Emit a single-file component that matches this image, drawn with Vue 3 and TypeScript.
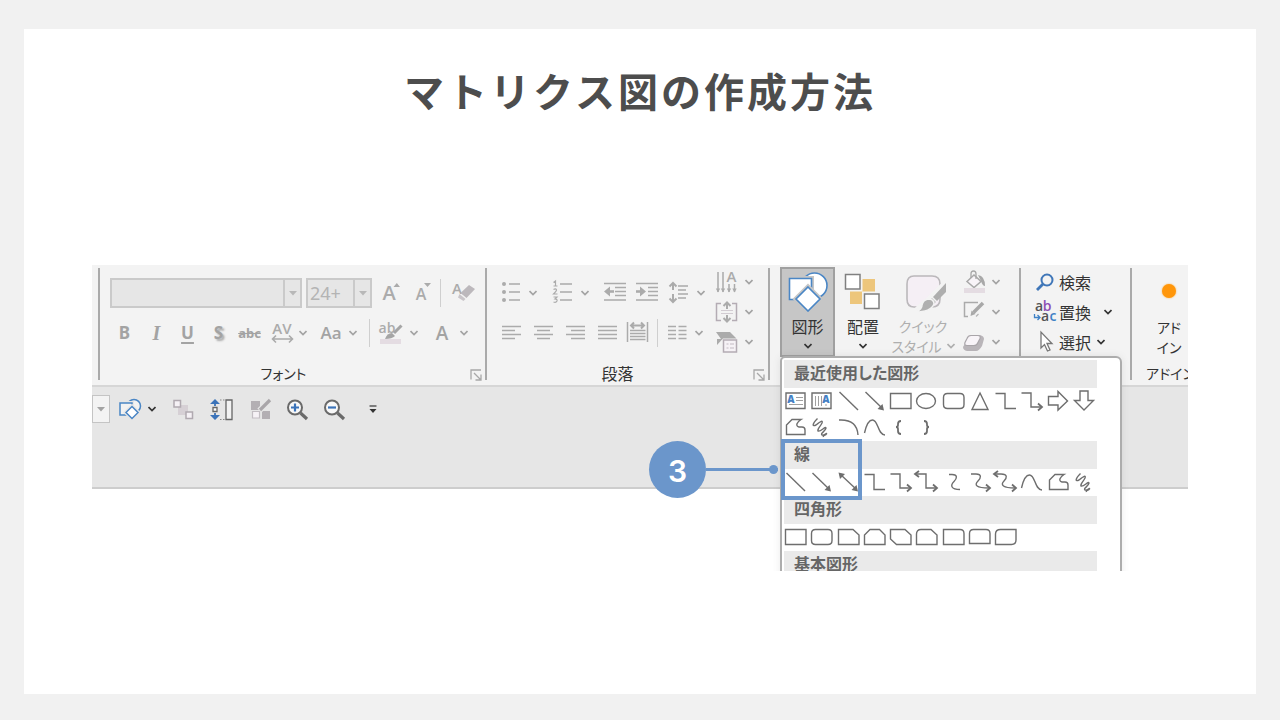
<script setup lang="ts">
import { h } from 'vue'

interface Part {
  tag: 'path' | 'text'
  attrs: Record<string, string | number>
  text?: string
}
interface Icon {
  w: number
  h: number
  parts: Part[]
}

const GREY = '#ababab'
const INK = '#6e6e6e'
const BLUE = '#4a86c5'

const line = (d: string, stroke = GREY, width = 1.5, fill = 'none'): Part => ({
  tag: 'path',
  attrs: { d, stroke, 'stroke-width': width, fill },
})
const solid = (d: string, fill = GREY): Part => ({ tag: 'path', attrs: { d, fill } })
const label = (text: string, x: number, y: number, size: number, fill = GREY, weight = 600): Part => ({
  tag: 'text',
  attrs: {
    x, y, fill, 'font-size': size, 'font-weight': weight,
    'text-anchor': 'middle', 'font-family': '"Open Sans", "Noto Sans", sans-serif',
  },
  text,
})
const circle = (cx: number, cy: number, r: number) =>
  `M${cx - r} ${cy}a${r} ${r} 0 1 0 ${2 * r} 0a${r} ${r} 0 1 0 ${-2 * r} 0z`
const icon = (w: number, hgt: number, ...parts: Part[]): Icon => ({ w, h: hgt, parts })
const tool = (...parts: Part[]) => icon(32, 30, ...parts)
const quick = (...parts: Part[]) => icon(36, 36, ...parts)
const shape = (d: string, ...rest: Part[]) => icon(26, 26, line(d, INK, 1.4), ...rest)

const headSE = solid('M23 22.5l-6.5-1.500 5-5z', INK)
const headNW = solid('M3.500 3.500l6.500 1.500-5 5z', INK)
const headE = line('M20 15.500l4 3.500-4 3.500', INK, 1.8)
const headW = line('M6 2l-4 3 4 3', INK, 1.8)
const scribble = 'M9.500 4.500C4 10 4 13 8 11c5-4 7-5 6-2-2 4-5 6-4 8 3 1 7-5 8-3-1 4-6 5-4 7 2 1 5-3 4.500-1-1 2-4 1-3 3'
const freeform = 'M4.500 20.500v-9.500L10 5.500h9c-4 2.500-6 6.500-2 7.500h3q3 0 3 3v4.500z'
const wave = 'M3.500 19c2-9 5-13 8-13 6 0 5 15 12.500 15'
const roundRect = 'M7.500 5.500h12.500q4 0 4 4v7q0 4-4 4h-12.500q-4 0-4-4v-7q0-4 4-4z'

const icons: Record<string, Icon> = {
  chevron: icon(8, 6, line('M0.500 1l3.500 3.500L7.500 1', 'currentColor', 1.7)),
  caret: icon(8, 5, solid('M0 0h8L4 4.500z', 'currentColor')),
  launcher: icon(12, 12, line('M1 10.500V1h10M4 4l6.500 6.500M11 5.500v5.500H5.500', '#a8a8a8', 1.3)),
  growA: icon(30, 30, label('A', 13, 22, 20), solid('M17.500 9h6.500l-3.200-4z')),
  shrinkA: icon(26, 30, label('A', 11, 22, 16), solid('M14 5h7l-3.500 4z')),
  eraser: icon(34, 30, label('A', 12, 16, 15), solid('M24 7l6 4-8.500 9-6-5z', '#bcb8bc'), solid('M14.500 16l6 5-2 2-5.500-3.500z', '#c9c5c9')),
  spacing: tool(label('AV', 17, 16, 15), line('M8 21h19M11 17.500L7.500 21l3.500 3.500M24 17.500l3.500 3.500-3.500 3.500', GREY, 1.6)),
  marker: tool(label('ab', 11, 15, 14), line('M25.500 7.500L18 15', '#a5a5a5', 3), solid('M9 21q2-6 7-6l3 3q-3 3-10 3z', '#a5a5a5'), solid('M4 21h21v5H4z', '#e4dce2')),
  bullets: tool(solid(circle(9, 6, 2) + circle(9, 14, 2) + circle(9, 22, 2)), line('M14 6h11M14 14h11M14 22h11')),
  numbers: tool(line('M6.500 4.500L8.500 3v5M6.500 8h4M6.500 11.500q2.500-1.500 3 .5 0 1-3 4h4M6.500 19h3.500l-2 2q2.500 0 2 2-1 2-3.500 1', GREY, 1.2), line('M13 6h12M13 14h12M13 22h12')),
  outdent: tool(line('M5 5.500h22M16 9.500h11M16 13.500h11M16 17.500h11M5 22h22'), line('M15 13.500H8', GREY, 2.6), solid('M5 13.500l6-5v10z')),
  indent: tool(line('M5 5.500h22M17 9.500h10M17 13.500h10M17 17.500h10M5 22h22'), line('M5 13.500h7', GREY, 2.6), solid('M15 13.500l-6-5v10z')),
  leading: tool(line('M10 5v7M10 16v8M6.500 8.500L10 5l3.500 3.500M6.500 20.500L10 24l3.500-3.500', GREY, 2), line('M15 8h10M15 12h8M15 16h10M15 20h8')),
  alignLeft: tool(line('M7 8.500h19M7 12.500h13M7 16.500h19M7 20.500h13')),
  alignCenter: tool(line('M7 8.500h19M10 12.500h13M7 16.500h19M10 20.500h13')),
  alignRight: tool(line('M7 8.500h19M12 12.500h14M7 16.500h19M12 20.500h14')),
  justify: tool(line('M7 8.500h19M7 12.500h19M7 16.500h19M7 20.500h19')),
  distribute: tool(line('M4.500 4v20M24.500 4v20M7 12.500h15.500M7 15.500h15.500M7 18.500h15.500M7 21.500h15.500'), line('M8 7.500h13M11 4.500l-3 3 3 3M18 4.500l3 3-3 3', GREY, 2)),
  columns: tool(line('M7 8.500h8M7 12.500h8M7 16.500h8M7 20.500h8M17.500 8.500h8M17.500 12.500h8M17.500 16.500h8M17.500 20.500h8')),
  textDir: tool(line('M7 5v20M12 5v20M18 17v8M23.500 17v8'), solid('M4.800 21.500h4.400L7 25.500zM9.800 21.500h4.400L12 25.500zM15.800 21.500h4.400L18 25.500zM21.300 21.500h4.400l-2.200 4z'), label('A', 20.5, 15, 15)),
  textAlign: tool(line('M10 6.500H5.500v17H10M21 6.500h4.500v17H21', '#b4acb4'), line('M16 6v6M16 18v6M12.500 9L16 5.500 19.500 9M12.500 21l3.500 3.500 3.500-3.500', GREY, 2), line('M10 13.500h12M10 16.500h12', '#d2ccd2', 1)),
  smartArt: tool(solid('M5 5h14l6.500 6.500H12L6 18v-6h4z'), line('M12.500 13h13v12h-13z', '#b4acb4', 1.5, '#f6f2f6'), line('M15.500 17h2M19 17h4M15.500 21h2M19 21h4', '#c2bac2', 1.2)),
  shapes: icon(42, 42,
    line(circle(27.5, 15.5, 12.5), BLUE, 1.6, '#fff'),
    line('M2.500 8.500h22v21h-22z', '#c6c6c6', 5),
    line('M2.500 8.500h22v21h-22z', BLUE, 1.6, '#fff'),
    line('M21 17l12 12-12 12L9 29z', '#c6c6c6', 5),
    line('M21 17l12 12-12 12L9 29z', BLUE, 1.6, '#fff')),
  arrange: icon(42, 42, solid('M20 9h13v14H20.500v11H8V21h12z', '#edc67c'),
    line('M3.500 4.500h14.500v14.500h-14.500z', '#f3f3f3', 5), line('M22.500 24h14.500v14.500h-14.500z', '#f3f3f3', 5),
    line('M3.500 4.500h14.500v14.500h-14.500z', '#808080', 1.5, '#fff'), line('M22.500 24h14.500v14.500h-14.500z', '#808080', 1.5, '#fff')),
  quickStyle: icon(46, 42,
    line('M14 6h18q8 0 8 8v15q0 8-8 8H14q-7 0-7-8V14q0-8 7-8z', '#bbb8bb', 1.6, '#f5eff5'),
    line('M46 15L30 31l-12 10', '#f3f3f3', 9),
    solid('M46 13v9L37 31l-4-4z', '#aeaeae'), solid('M32 28l4 4-3 3-4-4z', '#c4c4c4'),
    line('M28 29q6 0 6 5-3 8-19 8 7-2 7-7 1-5 6-6z', '#f3f3f3', 1.5, '#b0b0b0')),
  fill: tool(line('M9 14.500l7-6.500 7 6.500-7 6z', '#a8a8a8', 1.5, '#f8f4f8'), line('M13 11V7q0-3 2.500-3T18 7v5', '#a8a8a8', 1.3), solid('M20 8q7 1 7 11-2.500 0-4-5z', '#a8a8a8'), solid('M6 21h21v5H6z', '#e4dce2')),
  outline: tool(line('M20 5.500H6.500v14h3.500', '#aaa'), line('M25 6L15.500 15.500', '#a8a8a8', 3.5), solid('M13.500 13.500l4 3.500-5 2z', '#a8a8a8'), line('M20.500 17l-2.500 2.500', '#b5b5b5', 1.3)),
  effects: tool(solid('M12 8h10q4 1 4 4l-2 7q-3 5-6 5H9q-4-1-4-4z', '#b9b5b9'), line('M13 8.500h7q3 0 2 3l-2 4q-1 3-4 3H9q-3 0-2-3l2-4q1-3 4-3z', '#a9a5a9', 1.2, '#f8f4f8')),
  search: icon(28, 30, line(circle(17, 13, 5.5), '#3f76b8', 2), line('M13 17l-6 6', '#3f76b8', 2.8)),
  replace: icon(28, 30, label('a', 9, 14, 14, '#555'), label('b', 17, 14, 14, '#8e4fb5'), label('a', 15, 24, 14, '#555'), label('c', 23, 24, 14, '#3f82c6'), line('M4.500 17v3.500h5M7.500 18l2.500 2.500L7.500 23', '#3f82c6', 1.3)),
  select: icon(28, 30, line('M11 5v16l3.500-3.500 3 6.500 2.500-1-3-6.500h5z', '#777', 1.3, '#fff')),
  quickShapes: quick(line(circle(22, 15, 6.5), BLUE, 1.5, '#f2f2f2'), line('M8 12h12v12H8z', '#e6e6e6', 4), line('M8 12h12v12H8z', BLUE, 1.5, '#f2f2f2'), line('M20 15.500l6 6-6 6-6-6z', '#e6e6e6', 4), line('M20 15.500l6 6-6 6-6-6z', BLUE, 1.5, '#fff')),
  group: quick(solid('M13 14h10v10H13z', '#d6d0d5'), line('M9 9.500h6.500V16H9zM21 21h6.500v6.500H21z', '#b0a9b0', 1.5, '#f5f1f5')),
  size: quick(solid('M12 8l5 5H7zM12 29l5-5H7z', '#3b73b9'), line('M12 11v4M12 22v4', '#3b73b9', 1.8), line('M10 16.500h4v4h-4z', '#666', 1.3, '#fff'), line('M23 9h6v19.500h-6z', '#666', 1.3, '#f2f2f2'), { tag: 'path', attrs: { d: 'M17 9h6M17 28.500h6', stroke: '#888', 'stroke-dasharray': '1.500 1.500' } }),
  editPoints: quick(solid('M10 10h9v9h-9zM21 20h8v8h-8z', '#b3afb3'), line('M11.500 20.500h7V27h-7z', '#c3bec3', 1.2, '#f6f2f6'), line('M29 9L18.500 19.500', '#e6e6e6', 6), line('M29 9L19 19', '#a9a6a9', 3.2)),
  zoomIn: quick(line(circle(16, 16.5, 7), '#6a6a6a', 2, '#f8f8f8'), line('M21.500 22l6.500 6', '#6a6a6a', 3.2), line('M12 16.500h8M16 12.500v8', '#3b73b9', 2.2)),
  zoomOut: quick(line(circle(15, 16.5, 7), '#6a6a6a', 2, '#f8f8f8'), line('M20.500 22l6.500 6', '#6a6a6a', 3.2), line('M11 16.500h8', '#3b73b9', 2.2)),
  more: quick(line('M14.500 15h7', '#444', 1.3), solid('M14.500 18h7L18 22z', '#333')),
  textBox: shape('M4 5h19v15.500H4z', label('A', 9, 15, 10, '#4580c4', 800), line('M14 9.500h7M14 12.500h7M7 16.500h14', '#a0a0a0', 1)),
  textBoxV: shape('M4 5h19v15.500H4z', label('A', 18, 15, 10, '#4580c4', 800), line('M7.500 8v10M10.500 8v10M13.500 8v10M18 16v2', '#a0a0a0', 1)),
  line: shape('M4.500 4L23 22'),
  arrow: shape('M4.500 4l17 16.500', headSE),
  arrows: shape('M5 5l16.500 15.500', headSE, headNW),
  rect: shape('M3.500 5.500H24v15H3.500z'),
  oval: shape('M3.500 13a9.500 7.500 0 1 0 19 0a9.500 7.500 0 1 0 -19 0z'),
  roundRect: shape(roundRect),
  triangle: shape('M14 5l8 16.500H6z'),
  elbow: shape('M3.500 5.500H13v15h11'),
  elbowArrow: shape('M3.500 5H13v14h10', headE),
  elbowArrows: shape('M3 5h10v14h10', headE, headW),
  rightArrow: shape('M3.500 8.500H13v-5l9.500 9.500L13 22v-5H3.500z'),
  downArrow: shape('M9 3h8v9.500h5.500L13 22l-9.500-9.500H9z'),
  freeform: shape(freeform),
  scribble: shape(scribble),
  arc: shape('M4 6q18-1 19 15'),
  wave: shape(wave),
  braceL: icon(26, 26, line('M14 7q-3 0-3 3v1q0 2-2 2 2 0 2 2v2q0 3 3 3', INK, 1.8)),
  braceR: icon(26, 26, line('M11 7q3 0 3 3v1q0 2 2 2-2 0-2 2v2q0 3-3 3', INK, 1.8)),
  curve: shape('M9 5.500h3c6 0 5 4 2 7-4 4-3 8 6 8'),
  curveArrow: shape('M5 5h5c6 0 5 4 2 7-4 4-2 7 11 7', headE),
  curveArrows: shape('M3 5h6c7 0 6 4 3 7-4 4-1 7 11 7', headE, headW),
  snipOne: shape('M3.500 5.500H18l6 5.500v9.500H3.500z'),
  snipTwo: shape('M9 5.500h9.500L24 11v9.500H3.500V11z'),
  snipDiag: shape('M3.500 5.500H18l6 5.500v9.500H9.500l-6-5.500z'),
  snipRound: shape('M8 5.500h10l6 5.500v9.500H3.500V10q0-4.500 4.500-4.500z'),
  roundOne: shape('M3.500 5.500H20q4 0 4 4v11H3.500z'),
  roundTwo: shape('M7.500 5.500H20q4 0 4 4v10H3.500v-10q0-4 4-4z'),
  roundDiag: shape('M8.500 5.500H24v10.500q0 4.500-4.500 4.500h-16V10q0-4.500 5-4.500z'),
}

const Glyph = (props: { name: string }) => {
  const i = icons[props.name]
  return h(
    'svg',
    { width: i.w, height: i.h, viewBox: `0 0 ${i.w} ${i.h}`, 'aria-hidden': 'true' },
    i.parts.map((p) => h(p.tag, p.attrs, p.text)),
  )
}
Glyph.props = ['name']

const menu = [
  {
    title: '最近使用した図形',
    shapes: [
      'textBox', 'textBoxV', 'line', 'arrow', 'rect', 'oval', 'roundRect', 'triangle', 'elbow', 'elbowArrow', 'rightArrow', 'downArrow',
      'freeform', 'scribble', 'arc', 'wave', 'braceL', 'braceR',
    ],
  },
  {
    title: '線',
    step: 3,
    shapes: ['line', 'arrow', 'arrows', 'elbow', 'elbowArrow', 'elbowArrows', 'curve', 'curveArrow', 'curveArrows', 'wave', 'freeform', 'scribble'],
  },
  {
    title: '四角形',
    shapes: ['rect', 'roundRect', 'snipOne', 'snipTwo', 'snipDiag', 'snipRound', 'roundOne', 'roundTwo', 'roundDiag'],
  },
  { title: '基本図形', shapes: [] },
]
const styleTools = ['fill', 'outline', 'effects']
const textTools = ['textDir', 'textAlign', 'smartArt']
const aligns = ['alignLeft', 'alignCenter', 'alignRight', 'justify', 'distribute']
const quickTools = ['group', 'size', 'editPoints', 'zoomIn', 'zoomOut', 'more']
</script>

<template>
  <div class="page">
    <main class="slide">
      <h1>マトリクス図の作成方法</h1>

      <section class="app">
        <div class="ribbon">
          <span class="rule"></span>
          <div class="group font">
            <div class="rows">
              <div class="row spaced">
                <label class="combo family">
                  <select disabled aria-label="フォント名"><option></option></select>
                  <span class="drop"><Glyph name="caret" /></span>
                </label>
                <label class="combo points">
                  <select disabled aria-label="サイズ"><option>24+</option></select>
                  <span class="drop"><Glyph name="caret" /></span>
                </label>
                <button disabled><Glyph name="growA" /></button>
                <button disabled><Glyph name="shrinkA" /></button>
                <span class="bar"></span>
                <button disabled><Glyph name="eraser" /></button>
              </div>
              <div class="row">
                <button disabled class="mark">B</button>
                <button disabled class="mark italic">I</button>
                <button disabled class="mark under">U</button>
                <button disabled class="mark shadow">S</button>
                <button disabled class="mark strike">abc</button>
                <button disabled class="split"><Glyph name="spacing" /><Glyph name="chevron" /></button>
                <button disabled class="split after"><span class="letter">Aa</span><Glyph name="chevron" /></button>
                <span class="bar wide"></span>
                <button disabled class="split"><Glyph name="marker" /><Glyph name="chevron" /></button>
                <button disabled class="split after"><span class="letter big">A</span><Glyph name="chevron" /></button>
              </div>
            </div>
            <footer class="kana">フォント<Glyph name="launcher" class="launch" /></footer>
          </div>

          <span class="rule"></span>
          <div class="group para">
            <div class="cols">
              <div class="rows">
                <div class="row">
                  <button disabled class="split"><Glyph name="bullets" /><Glyph name="chevron" /></button>
                  <button disabled class="split far"><Glyph name="numbers" /><Glyph name="chevron" /></button>
                  <button disabled class="far"><Glyph name="outdent" /></button>
                  <button disabled><Glyph name="indent" /></button>
                  <button disabled class="split"><Glyph name="leading" /><Glyph name="chevron" /></button>
                </div>
                <div class="row">
                  <button v-for="a in aligns" :key="a" disabled><Glyph :name="a" /></button>
                  <span class="bar near"></span>
                  <button disabled class="split"><Glyph name="columns" /><Glyph name="chevron" /></button>
                </div>
              </div>
              <div class="stack">
                <button v-for="t in textTools" :key="t" disabled class="split"><Glyph :name="t" /><Glyph name="chevron" /></button>
              </div>
            </div>
            <footer>段落<Glyph name="launcher" class="launch" /></footer>
          </div>

          <span class="rule"></span>
          <div class="group draw">
            <div class="cols">
              <div class="anchor">
                <button class="large active" aria-expanded="true"><Glyph name="shapes" /><span>図形</span><Glyph name="chevron" /></button>
                <div class="menu">
                  <section v-for="s in menu" :key="s.title">
                    <h2>{{ s.title }}</h2>
                    <div class="grid">
                      <button v-for="(n, i) in s.shapes" :key="i"><Glyph :name="n" /></button>
                    </div>
                    <template v-if="s.step">
                      <div class="focus"></div>
                      <div class="callout"><b>{{ s.step }}</b><i></i></div>
                    </template>
                  </section>
                </div>
              </div>
              <button class="large"><Glyph name="arrange" /><span>配置</span><Glyph name="chevron" /></button>
              <button disabled class="large styles kana">
                <Glyph name="quickStyle" /><span>クイック</span>
                <span class="tail">スタイル<Glyph name="chevron" /></span>
              </button>
              <div class="stack">
                <button v-for="t in styleTools" :key="t" disabled class="split"><Glyph :name="t" /><Glyph name="chevron" /></button>
              </div>
            </div>
          </div>

          <span class="rule"></span>
          <div class="group edit">
            <div class="stack">
              <button class="command"><Glyph name="search" />検索</button>
              <button class="command loose"><Glyph name="replace" />置換<Glyph name="chevron" /></button>
              <button class="command"><Glyph name="select" />選択<Glyph name="chevron" /></button>
            </div>
          </div>

          <span class="rule"></span>
          <div class="group addin kana">
            <button class="addin-button"><i class="dot"></i><span>アド<br />イン</span></button>
            <footer>アドイン</footer>
          </div>
        </div>

        <div class="quickbar">
          <button class="stub" disabled><Glyph name="caret" /></button>
          <button class="pick"><Glyph name="quickShapes" /><Glyph name="chevron" /></button>
          <div class="tools">
            <button v-for="q in quickTools" :key="q"><Glyph :name="q" /></button>
          </div>
        </div>
      </section>
    </main>
  </div>
</template>

<style>
body {
  margin: 0;
}
</style>

<style scoped>
* {
  box-sizing: border-box;
}
.page {
  min-height: 100vh;
  padding: 29px 24px 26px;
  display: flex;
  background: #f1f1f1;
  font-family: "Noto Sans", "Noto Sans CJK JP", sans-serif;
  color: #333;
}
.slide {
  flex: 1;
  min-width: 0;
  background: #fff;
}
h1 {
  margin: 31px 0 145px;
  font-family: "Noto Sans CJK JP", sans-serif;
  font-size: 40px;
  line-height: 60px;
  letter-spacing: 3px;
  text-align: center;
  color: #4d4d4d;
}
svg {
  display: block;
  flex: none;
}
button {
  padding: 0;
  border: 0;
  background: none;
  font: inherit;
  color: inherit;
  line-height: 20px;
}
button:disabled {
  color: #a3a3a3;
}
.app {
  position: relative;
  margin: 0 68px;
  min-height: 306px;
  overflow: hidden;
  font-family: "Noto Sans CJK JP", sans-serif;
  font-size: 16px;
  line-height: 20px;
  font-feature-settings: "palt";
}
.ribbon {
  height: 120px;
  padding-left: 6px;
  display: flex;
  background: #f3f3f3;
}
.rule {
  flex: none;
  width: 2px;
  margin: 3px 0 5px;
  background: #aaa;
}
.group {
  display: flex;
  flex-direction: column;
  justify-content: space-between;
  min-width: 0;
}
.font {
  flex: 385 1 385px;
  padding-left: 10px;
}
.para {
  flex: 281 1 281px;
  padding-left: 8px;
}
.draw {
  flex: 249 1 249px;
  padding-left: 10px;
}
.edit {
  flex: 109 1 109px;
  padding-left: 9px;
}
.addin {
  flex: 56 1 56px;
}
.kana {
  font-size: 14px;
}
.rows {
  padding-top: 13px;
  display: flex;
  flex-direction: column;
  gap: 10px;
}
.row {
  height: 30px;
  display: flex;
  align-items: center;
}
.spaced {
  gap: 4px;
}
.cols {
  display: flex;
}
.para .cols {
  gap: 6px;
}
.stack {
  padding-top: 2px;
}
.stack button {
  height: 30px;
}
.split {
  display: flex;
  align-items: center;
  gap: 2px;
}
.after {
  margin-left: 8px;
}
.far {
  margin-left: 10px;
}
.bar {
  width: 1px;
  height: 28px;
  background: #cfcfcf;
}
.wide {
  margin: 0 6px 0 12px;
}
.near {
  margin: 0 3px 0 2px;
}
.combo {
  height: 30px;
  display: flex;
  border: 2px solid #cacaca;
  background: #e6e6e6;
}
.family {
  width: 192px;
}
.points {
  width: 66px;
}
select {
  flex: 1;
  min-width: 0;
  padding: 0 2px;
  border: 0;
  appearance: none;
  background: none;
  font: 18px "Noto Sans", sans-serif;
  color: #b4b4b4;
  opacity: 1;
}
.drop {
  width: 17px;
  display: flex;
  align-items: center;
  justify-content: center;
  border-left: 2px solid #cacaca;
  color: #b8b8b8;
}
.mark {
  width: 31px;
  font: bold 17px/30px "Noto Sans", sans-serif;
  text-align: center;
}
.mark:first-child {
  text-indent: -2px;
}
.italic {
  font-family: "Liberation Serif", serif;
  font-style: italic;
  font-size: 20px;
}
.under {
  text-decoration: underline;
  text-decoration-thickness: 2px;
  text-underline-offset: 3px;
}
.shadow {
  text-shadow: 2px 2px 2px #aaa;
}
.strike {
  font-size: 13px;
  text-decoration: line-through;
}
.letter {
  width: 32px;
  font: 600 17px/30px "Open Sans", "Noto Sans", sans-serif;
  text-align: center;
}
.big {
  font-size: 19px;
}
footer {
  position: relative;
  height: 22px;
  padding-right: 28px;
  line-height: 20px;
  text-align: center;
}
.launch {
  position: absolute;
  right: 3px;
  top: 6px;
}
.anchor {
  position: relative;
  padding-top: 2px;
}
.large {
  width: 56px;
  padding-top: 5px;
  display: flex;
  flex-direction: column;
  align-items: center;
}
.large span {
  margin: 4px 0 7px;
}
.active {
  width: 55px;
  height: 90px;
  padding-top: 1px;
  border: 2px solid #a0a0a0;
  background: #c6c6c6;
}
.draw .styles {
  width: 64px;
  margin-right: 3px;
}
.draw .styles span {
  margin-bottom: 0;
  white-space: nowrap;
  color: #aeaeae;
}
.draw .styles .tail {
  margin-top: 0;
  display: flex;
  align-items: center;
  gap: 5px;
}
.command {
  display: flex;
  align-items: center;
  gap: 1px;
  white-space: nowrap;
}
.command svg:last-child:not(:first-child) {
  margin-left: 5px;
}
.loose svg:last-child:not(:first-child) {
  margin-left: 12px;
}
.addin-button {
  padding: 19px 0 0 18px;
  display: flex;
  flex-direction: column;
  align-items: center;
}
.dot {
  width: 14px;
  height: 14px;
  margin-bottom: 19px;
  border-radius: 50%;
  background: #ff960a;
  box-shadow: 0 0 2px #ffb44d;
}
.addin footer {
  padding: 0 0 0 14px;
  text-align: left;
  white-space: nowrap;
}
.quickbar {
  height: 104px;
  padding-bottom: 56px;
  display: flex;
  align-items: center;
  border-top: 2px solid #d6d6d6;
  border-bottom: 2px solid #cdcdcd;
  background: #e6e6e6;
}
.stub {
  width: 18px;
  height: 28px;
  display: flex;
  align-items: center;
  justify-content: center;
  border: 1px solid #c4c4c4;
  background: #f3f3f3;
}
.pick {
  display: flex;
  align-items: center;
  margin: 0 9px 0 2px;
}
.tools {
  display: flex;
  gap: 2px;
}
.menu {
  position: absolute;
  z-index: 2;
  left: 0;
  top: 91px;
  width: 342px;
  height: 240px;
  padding: 2px 23px 0 0;
  border: 2px solid #adadad;
  border-radius: 5px 6px 0 0;
  background: #fff;
  box-shadow: 0 0 8px rgba(0, 0, 0, 0.08);
}
.menu section {
  position: relative;
  padding-bottom: 1px;
}
h2 {
  height: 28px;
  margin: 0 0 0 2px;
  padding-left: 10px;
  font-size: 16px;
  font-weight: 700;
  line-height: 24px;
  background: #eaeaea;
  color: #666;
}
.grid {
  display: grid;
  grid-template-columns: repeat(12, 1fr);
}
.grid button {
  height: 26px;
}
.focus {
  position: absolute;
  z-index: 1;
  left: -1px;
  top: -2px;
  width: 81px;
  height: 61px;
  border: 4px solid #6b96cb;
}
.callout {
  position: absolute;
  left: -133px;
  top: 0;
  width: 129px;
  display: flex;
  align-items: center;
}
.callout b {
  width: 57px;
  height: 57px;
  border-radius: 50%;
  background: #6b96cb;
  color: #fff;
  font: 600 30px/61px Inter, sans-serif;
  text-align: center;
}
.callout i {
  position: relative;
  flex: 1;
  height: 3px;
  background: #6b96cb;
}
.callout i::after {
  content: "";
  position: absolute;
  right: 0;
  top: -3px;
  width: 9px;
  height: 9px;
  border-radius: 50%;
  background: #6b96cb;
}
</style>
